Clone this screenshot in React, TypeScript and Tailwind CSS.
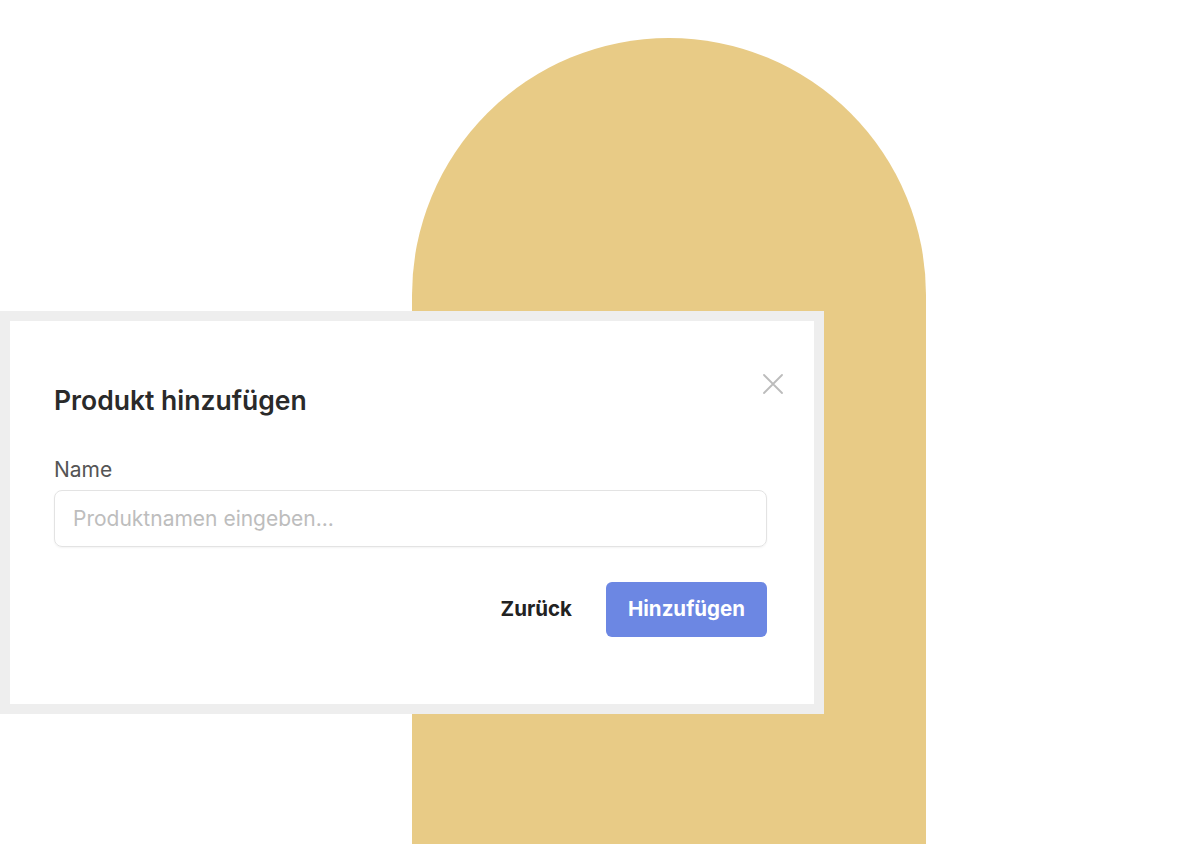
function CloseIcon() {
  return (
    <svg viewBox="0 0 20 20" className="h-5 w-5" fill="none">
      <path
        d="M1 1l18 18M19 1L1 19"
        stroke="currentColor"
        strokeWidth="1.8"
        strokeLinecap="round"
      />
    </svg>
  );
}

function ProductDialog() {
  return (
    <div className="relative col-start-1 row-start-1 mt-[311px] h-[403px] w-[824px] self-start border-[10px] border-[#eeeeee] bg-white">
      <button className="absolute right-[31px] top-[53px] text-[#bcbcbc]">
        <CloseIcon />
      </button>
      <div className="px-[44px] pt-[63px]">
        <h2 className="text-[26.5px] font-semibold leading-8 text-[#2a2a2a]">
          Produkt hinzufügen
        </h2>
        <label className="mt-[42px] block text-[21px] leading-6 text-[#555555]">
          Name
        </label>
        <input
          type="text"
          placeholder="Produktnamen eingeben..."
          className="mt-[8px] h-[57px] w-[713px] rounded-lg border border-[#e3e3e3] px-[18px] text-[21px] text-[#333] shadow-[0_1px_2px_rgba(0,0,0,0.05)] outline-none placeholder:text-[#bdbdbd]"
        />
        <div className="mt-[35px] flex w-[713px] items-center justify-end gap-[34px]">
          <button className="text-[20.5px] font-bold text-[#222222]">Zurück</button>
          <button className="h-[55px] w-[161px] rounded-md bg-[#6c87e3] text-[20.5px] font-bold text-white">
            Hinzufügen
          </button>
        </div>
      </div>
    </div>
  );
}

export default function App() {
  return (
    <div
      className="grid h-[844px] w-full overflow-hidden bg-white"
      style={{ fontFamily: "Inter, 'Noto Sans', sans-serif" }}
    >
      <div className="col-start-1 row-start-1 ml-[412px] mt-[38px] h-[806px] w-[514px] self-start rounded-t-full bg-[#e8cb86]" />
      <ProductDialog />
    </div>
  );
}
